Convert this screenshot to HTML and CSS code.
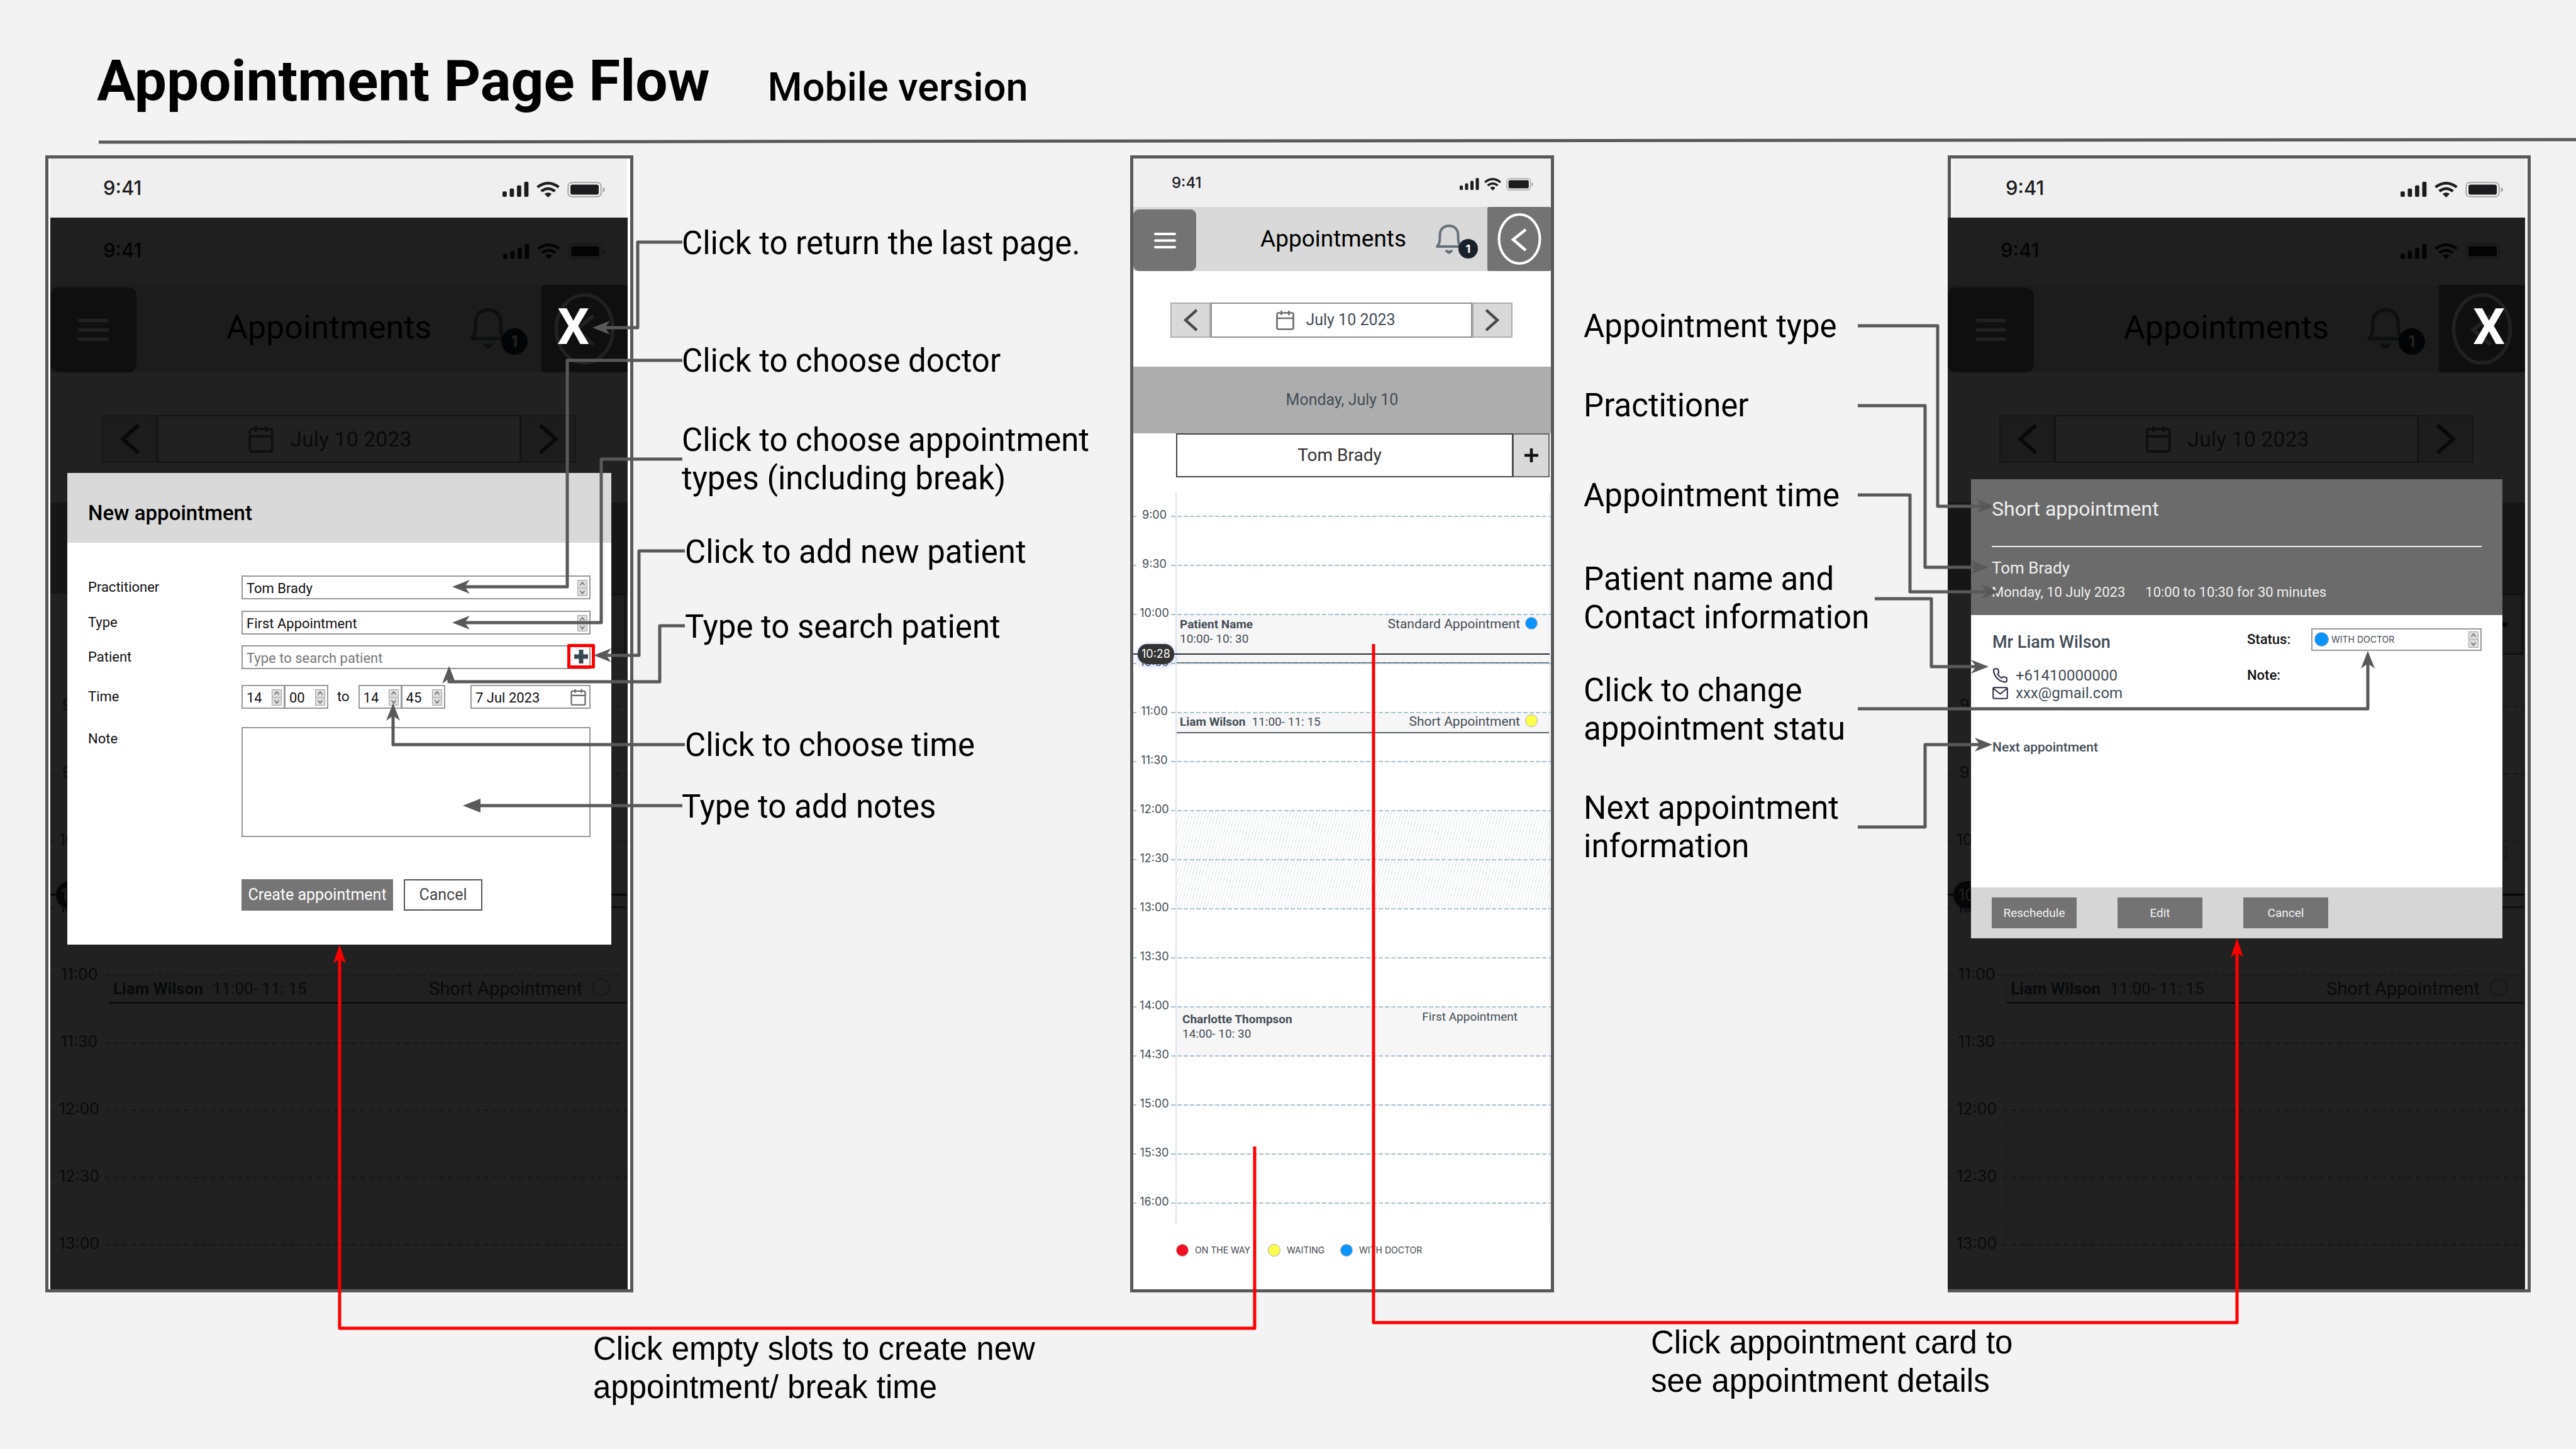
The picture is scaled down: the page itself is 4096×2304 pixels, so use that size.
FILE: index.html
```html
<!DOCTYPE html>
<html lang="en">
<head>
<meta charset="utf-8">
<title>Appointment Page Flow</title>
<link rel="stylesheet" href="styles.css">
</head>
<body>
<svg class="sprite" aria-hidden="true">
  <symbol id="i-signal" viewBox="0 0 31 19" preserveAspectRatio="none"><rect x="0" y="12" width="5" height="7" rx="1.5"/><rect x="8.5" y="8.5" width="5" height="10.500" rx="1.5"/><rect x="17" y="4.500" width="5" height="14.500" rx="1.5"/><rect x="25.500" y="0" width="5" height="19" rx="1.500"/></symbol>
  <symbol id="i-wifi" viewBox="0 0 27 20" preserveAspectRatio="none"><g fill="none" stroke="currentColor" stroke-width="3.4"><path d="M1.200 6.900Q13.500 -3.200 25.800 6.900"/><path d="M5.600 12Q13.500 5.400 21.400 12"/></g><path d="M9.300 15.400Q13.500 12 17.700 15.400L13.500 20Z"/></symbol>
  <symbol id="i-battery" viewBox="0 0 43 20" preserveAspectRatio="none"><rect x="1" y="1" width="37.500" height="18" rx="4.500" fill="#fff" fill-opacity=".4" stroke="#a6a6a6" stroke-width="1.500"/><rect x="3.600" y="3.600" width="32.300" height="12.800" rx="2.500"/><path d="M40.500 7Q43 8 43 10T40.500 13.500Z" fill="#a6a6a6"/></symbol>
  <symbol id="i-menu" viewBox="0 0 35 25"><path d="M2 2H33M2 12.500H33M2 23H33" fill="none" stroke="currentColor" stroke-width="4" stroke-linecap="round"/></symbol>
  <symbol id="i-bell" viewBox="0 0 41 47"><path d="M2 35C6 31 6.500 27 6.500 17C6.500 8 12 2 21 2S35.500 8 35.500 17C35.500 27 36 31 39.500 35Z" fill="none" stroke="currentColor" stroke-width="4" stroke-linejoin="round"/><path d="M15.500 41.500Q21 50 26.500 41.500Q23.500 40 21 43Q18.500 40 15.500 41.500Z" stroke="currentColor" stroke-width="1.500" stroke-linejoin="round"/></symbol>
  <symbol id="i-back" viewBox="0 0 70 82"><ellipse cx="35" cy="41" rx="32.500" ry="39" fill="none" stroke="currentColor" stroke-width="4"/><path d="M45 26L25 42L45 59" fill="none" stroke="currentColor" stroke-width="4.500"/></symbol>
  <symbol id="i-left" viewBox="0 0 22 36"><path d="M21 2L3 18L21 34" fill="none" stroke="currentColor" stroke-width="4.500"/></symbol>
  <symbol id="i-right" viewBox="0 0 22 36"><path d="M1 2L19 18L1 34" fill="none" stroke="currentColor" stroke-width="4.500"/></symbol>
  <symbol id="i-cal" viewBox="0 0 29 32"><path d="M4 4.500H25Q27.500 4.500 27.500 7V28Q27.500 30.500 25 30.500H4Q1.500 30.500 1.500 28V7Q1.500 4.500 4 4.500ZM1.500 13H27.500M8.500 1V8M20.500 1V8" fill="none" stroke="currentColor" stroke-width="2.600"/></symbol>
  <symbol id="i-plus" viewBox="0 0 22 22"><path d="M11 0V22M0 11H22" fill="none" stroke="currentColor" stroke-width="4.500"/></symbol>
  <symbol id="i-cross" viewBox="0 0 22 22"><path d="M11 0V22M0 11H22" fill="none" stroke="currentColor" stroke-width="7"/></symbol>
  <symbol id="i-step" viewBox="0 0 16 26"><path d="M.5 .5H15.500V25.500H.5ZM.5 13H15.500" fill="#ddd" stroke="#a2a2a2"/><path d="M4.500 8.500L8 4L11.500 8.500M4.500 17.500L8 22L11.500 17.500" fill="none" stroke="#666" stroke-width="1.400"/></symbol>
  <symbol id="i-phone" viewBox="0 0 24 24"><path d="M22 17v3.200a2 2 0 0 1-2.200 2A19.800 19.800 0 0 1 1.800 4.200 2 2 0 0 1 3.800 2H7a2 2 0 0 1 2 1.700c.1 1 .4 1.900.7 2.800a2 2 0 0 1-.5 2.100L8 9.900a16 16 0 0 0 6 6l1.300-1.300a2 2 0 0 1 2.100-.4c.9.300 1.800.6 2.800.7A2 2 0 0 1 22 17z" fill="none" stroke="currentColor" stroke-width="2"/></symbol>
  <symbol id="i-mail" viewBox="0 0 25 20"><path d="M3 1.200H22Q23.800 1.200 23.800 3V17Q23.800 18.800 22 18.800H3Q1.200 18.800 1.200 17V3Q1.200 1.200 3 1.200ZM1.500 2.500L12.500 11.500L23.500 2.500" fill="none" stroke="currentColor" stroke-width="2"/></symbol>
</svg>

<header class="page-head">
  <h1>Appointment Page Flow</h1>
  <p class="subtitle">Mobile version</p>
</header>

<main class="board">
  <section class="phone phone--first" aria-label="New appointment screen">
    <div class="statusbar statusbar--outer"><span>9:41</span><span class="sys"><svg class="sig"><use href="#i-signal"/></svg><svg class="wifi"><use href="#i-wifi"/></svg><svg class="batt"><use href="#i-battery"/></svg></span></div>
    <div class="screen screen--large">
      <div class="statusbar"><span>9:41</span><span class="sys"><svg class="sig"><use href="#i-signal"/></svg><svg class="wifi"><use href="#i-wifi"/></svg><svg class="batt"><use href="#i-battery"/></svg></span></div>
      <div class="appbar">
        <button class="menu" type="button" aria-label="Menu"><svg><use href="#i-menu"/></svg></button>
        <h2>Appointments</h2>
        <span class="alerts"><svg><use href="#i-bell"/></svg><b>1</b></span>
        <button class="back" type="button" aria-label="Back"><svg><use href="#i-back"/></svg></button>
      </div>
      <div class="datenav">
        <button type="button" aria-label="Previous day"><svg><use href="#i-left"/></svg></button>
        <div class="date"><svg><use href="#i-cal"/></svg>July 10 2023</div>
        <button type="button" aria-label="Next day"><svg><use href="#i-right"/></svg></button>
      </div>
      <div class="dayband">Monday, July 10</div>
      <div class="doctor"><div class="doctor-name">Tom Brady</div><button type="button" aria-label="Add"><svg><use href="#i-plus"/></svg></button></div>
      <div class="slots">
        <div class="lead"></div>
        <div class="slot"><time>9:00</time><div class="lane"></div></div>
        <div class="slot"><time>9:30</time><div class="lane"></div></div>
        <div class="slot"><time>10:00</time><div class="lane"><div class="appt"><div class="who"><b>Patient Name</b><span>10:00- 10: 30</span></div><span class="kind">Standard Appointment</span><i class="dot dot--blue"></i></div></div><div class="now"><span>10:28</span></div></div>
        <div class="slot"><time>10:30</time><div class="lane"></div></div>
        <div class="slot"><time>11:00</time><div class="lane"><div class="appt appt--short"><div class="who"><b>Liam Wilson</b><span>11:00- 11: 15</span></div><span class="kind">Short Appointment</span><i class="dot dot--yellow"></i></div></div></div>
        <div class="slot"><time>11:30</time><div class="lane"></div></div>
        <div class="slot"><time>12:00</time><div class="lane lane--break"></div></div>
        <div class="slot"><time>12:30</time><div class="lane lane--break"></div></div>
        <div class="slot slot--last"><time>13:00</time><div class="lane"></div></div>
      </div>
    </div>
    <button class="close" type="button" aria-label="Close">X</button>
    <form class="modal modal--new">
      <h2>New appointment</h2>
      <div class="fields">
        <label for="practitioner">Practitioner</label>
        <div class="pick"><select id="practitioner"><option>Tom Brady</option></select><svg><use href="#i-step"/></svg></div>
        <label for="type">Type</label>
        <div class="pick"><select id="type"><option>First Appointment</option></select><svg><use href="#i-step"/></svg></div>
        <label for="patient">Patient</label>
        <div class="pick"><input id="patient" type="text" placeholder="Type to search patient"><button class="add" type="button" aria-label="Add new patient"><svg><use href="#i-cross"/></svg></button></div>
        <label for="from-h">Time</label>
        <div class="times">
          <div class="pair"><div class="pick"><input id="from-h" type="text" value="14"><svg><use href="#i-step"/></svg></div><div class="pick"><input type="text" value="00" aria-label="From minutes"><svg><use href="#i-step"/></svg></div></div>
          <span>to</span>
          <div class="pair"><div class="pick"><input type="text" value="14" aria-label="To hour"><svg><use href="#i-step"/></svg></div><div class="pick"><input type="text" value="45" aria-label="To minutes"><svg><use href="#i-step"/></svg></div></div>
          <div class="pick pick--date"><input type="text" value="7 Jul 2023" aria-label="Date"><svg><use href="#i-cal"/></svg></div>
        </div>
        <label for="note">Note</label>
        <textarea id="note"></textarea>
        <div class="actions"><button class="primary" type="button">Create appointment</button><button class="plain" type="button">Cancel</button></div>
      </div>
    </form>
  </section>

  <div class="notes notes--left">
    <p>Click to return the last page.</p>
    <p>Click to choose doctor</p>
    <p>Click to choose appointment<br>types (including break)</p>
    <p class="inset">Click to add new patient</p>
    <p class="inset">Type to search patient</p>
    <p class="inset">Click to choose time</p>
    <p>Type to add notes</p>
  </div>

  <section class="phone" aria-label="Appointments screen">
    <div class="screen">
      <div class="statusbar"><span>9:41</span><span class="sys"><svg class="sig"><use href="#i-signal"/></svg><svg class="wifi"><use href="#i-wifi"/></svg><svg class="batt"><use href="#i-battery"/></svg></span></div>
      <div class="appbar">
        <button class="menu" type="button" aria-label="Menu"><svg><use href="#i-menu"/></svg></button>
        <h2>Appointments</h2>
        <span class="alerts"><svg><use href="#i-bell"/></svg><b>1</b></span>
        <button class="back" type="button" aria-label="Back"><svg><use href="#i-back"/></svg></button>
      </div>
      <div class="datenav">
        <button type="button" aria-label="Previous day"><svg><use href="#i-left"/></svg></button>
        <div class="date"><svg><use href="#i-cal"/></svg>July 10 2023</div>
        <button type="button" aria-label="Next day"><svg><use href="#i-right"/></svg></button>
      </div>
      <div class="dayband">Monday, July 10</div>
      <div class="doctor"><div class="doctor-name">Tom Brady</div><button type="button" aria-label="Add"><svg><use href="#i-plus"/></svg></button></div>
      <div class="slots">
        <div class="lead"></div>
        <div class="slot"><time>9:00</time><div class="lane"></div></div>
        <div class="slot"><time>9:30</time><div class="lane"></div></div>
        <div class="slot"><time>10:00</time><div class="lane"><div class="appt"><div class="who"><b>Patient Name</b><span>10:00- 10: 30</span></div><span class="kind">Standard Appointment</span><i class="dot dot--blue"></i></div></div><div class="now"><span>10:28</span></div></div>
        <div class="slot"><time>10:30</time><div class="lane"></div></div>
        <div class="slot"><time>11:00</time><div class="lane"><div class="appt appt--short"><div class="who"><b>Liam Wilson</b><span>11:00- 11: 15</span></div><span class="kind">Short Appointment</span><i class="dot dot--yellow"></i></div></div></div>
        <div class="slot"><time>11:30</time><div class="lane"></div></div>
        <div class="slot"><time>12:00</time><div class="lane lane--break"></div></div>
        <div class="slot"><time>12:30</time><div class="lane lane--break"></div></div>
        <div class="slot"><time>13:00</time><div class="lane"></div></div>
        <div class="slot"><time>13:30</time><div class="lane"></div></div>
        <div class="slot"><time>14:00</time><div class="lane"><div class="appt appt--plain"><div class="who"><b>Charlotte Thompson</b><span>14:00- 10: 30</span></div><span class="kind">First Appointment</span></div></div></div>
        <div class="slot"><time>14:30</time><div class="lane"></div></div>
        <div class="slot"><time>15:00</time><div class="lane"></div></div>
        <div class="slot"><time>15:30</time><div class="lane"></div></div>
        <div class="slot slot--last"><time>16:00</time><div class="lane"></div></div>
      </div>
      <ul class="legend">
        <li><i class="dot dot--red"></i>ON THE WAY</li>
        <li><i class="dot dot--yellow"></i>WAITING</li>
        <li><i class="dot dot--blue"></i>WITH DOCTOR</li>
      </ul>
    </div>
  </section>

  <div class="notes notes--right">
    <p>Appointment type</p>
    <p>Practitioner</p>
    <p>Appointment time</p>
    <p>Patient name and<br>Contact information</p>
    <p>Click to change<br>appointment statu</p>
    <p>Next appointment<br>information</p>
  </div>

  <section class="phone phone--last" aria-label="Appointment details screen">
    <div class="statusbar statusbar--outer"><span>9:41</span><span class="sys"><svg class="sig"><use href="#i-signal"/></svg><svg class="wifi"><use href="#i-wifi"/></svg><svg class="batt"><use href="#i-battery"/></svg></span></div>
    <div class="screen screen--large">
      <div class="statusbar"><span>9:41</span><span class="sys"><svg class="sig"><use href="#i-signal"/></svg><svg class="wifi"><use href="#i-wifi"/></svg><svg class="batt"><use href="#i-battery"/></svg></span></div>
      <div class="appbar">
        <button class="menu" type="button" aria-label="Menu"><svg><use href="#i-menu"/></svg></button>
        <h2>Appointments</h2>
        <span class="alerts"><svg><use href="#i-bell"/></svg><b>1</b></span>
        <button class="back" type="button" aria-label="Back"><svg><use href="#i-back"/></svg></button>
      </div>
      <div class="datenav">
        <button type="button" aria-label="Previous day"><svg><use href="#i-left"/></svg></button>
        <div class="date"><svg><use href="#i-cal"/></svg>July 10 2023</div>
        <button type="button" aria-label="Next day"><svg><use href="#i-right"/></svg></button>
      </div>
      <div class="dayband">Monday, July 10</div>
      <div class="doctor"><div class="doctor-name">Tom Brady</div><button type="button" aria-label="Add"><svg><use href="#i-plus"/></svg></button></div>
      <div class="slots">
        <div class="lead"></div>
        <div class="slot"><time>9:00</time><div class="lane"></div></div>
        <div class="slot"><time>9:30</time><div class="lane"></div></div>
        <div class="slot"><time>10:00</time><div class="lane"><div class="appt"><div class="who"><b>Patient Name</b><span>10:00- 10: 30</span></div><span class="kind">Standard Appointment</span><i class="dot dot--blue"></i></div></div><div class="now"><span>10:28</span></div></div>
        <div class="slot"><time>10:30</time><div class="lane"></div></div>
        <div class="slot"><time>11:00</time><div class="lane"><div class="appt appt--short"><div class="who"><b>Liam Wilson</b><span>11:00- 11: 15</span></div><span class="kind">Short Appointment</span><i class="dot dot--yellow"></i></div></div></div>
        <div class="slot"><time>11:30</time><div class="lane"></div></div>
        <div class="slot"><time>12:00</time><div class="lane lane--break"></div></div>
        <div class="slot"><time>12:30</time><div class="lane lane--break"></div></div>
        <div class="slot slot--last"><time>13:00</time><div class="lane"></div></div>
      </div>
    </div>
    <button class="close" type="button" aria-label="Close">X</button>
    <div class="modal modal--details">
      <div class="summary">
        <h2>Short appointment</h2>
        <p class="summary-doctor">Tom Brady</p>
        <p class="summary-time"><span>Monday, 10 July 2023</span><span>10:00 to 10:30 for 30 minutes</span></p>
      </div>
      <div class="details">
        <div class="person">
          <h3>Mr Liam Wilson</h3>
          <p><svg class="tel"><use href="#i-phone"/></svg>+61410000000</p>
          <p><svg class="mail"><use href="#i-mail"/></svg>xxx@gmail.com</p>
          <h4>Next appointment</h4>
        </div>
        <div class="state">
          <label for="status">Status:</label>
          <div class="pick pick--status"><select id="status"><option>WITH DOCTOR</option></select><i class="dot dot--blue"></i><svg><use href="#i-step"/></svg></div>
          <span>Note:</span>
        </div>
      </div>
      <div class="footer"><button type="button">Reschedule</button><button type="button">Edit</button><button type="button">Cancel</button></div>
    </div>
  </section>
</main>

<footer class="captions">
  <p>Click empty slots to create new<br>appointment/ break time</p>
  <p>Click appointment card to<br>see appointment details</p>
</footer>

<svg class="wires" viewBox="0 0 4096 2304" aria-hidden="true">
  <defs>
    <marker id="tip" markerUnits="userSpaceOnUse" markerWidth="30" markerHeight="24" refX="20" refY="12" orient="auto"><path d="M0 1L28 12L0 23L8 12Z" fill="#595959"/></marker>
    <marker id="tip-solid" markerUnits="userSpaceOnUse" markerWidth="30" markerHeight="24" refX="20" refY="12" orient="auto"><path d="M0 1L28 12L0 23Z" fill="#595959"/></marker>
    <marker id="tip-red" markerUnits="userSpaceOnUse" markerWidth="32" markerHeight="24" refX="20" refY="12" orient="auto"><path d="M0 2L30 12L0 22L8 12Z" fill="#f00"/></marker>
  </defs>
  <g class="wire">
    <path d="M157 226L4096 222"/>
    <path d="M1085 385H1014V521H950" marker-end="url(#tip)"/>
    <path d="M1085 573H902V933H727" marker-end="url(#tip)"/>
    <path d="M1085 730H956V990H727" marker-end="url(#tip)"/>
    <path d="M1089 876H1016V1042H952" marker-end="url(#tip)"/>
    <path d="M1089 995H1049V1084H714V1067" marker-end="url(#tip)"/>
    <path d="M1089 1184H625V1126" marker-end="url(#tip)"/>
    <path d="M1085 1281H744" marker-end="url(#tip-solid)"/>
    <path d="M2954 518H3081V805H3163" marker-end="url(#tip)"/>
    <path d="M2954 645H3061V902H3154" marker-end="url(#tip)"/>
    <path d="M2954 787H3037V941H3171" marker-end="url(#tip)"/>
    <path d="M2981 952H3071V1060H3154" marker-end="url(#tip)"/>
    <path d="M2954 1127H3765V1043" marker-end="url(#tip)"/>
    <path d="M2954 1315H3061V1184H3160" marker-end="url(#tip)"/>
  </g>
  <g class="wire wire--red">
    <path d="M1995 1823V2112H540V1512" marker-end="url(#tip-red)"/>
    <path d="M2184 1024V2103H3557V1502" marker-end="url(#tip-red)"/>
  </g>
</svg>
</body>
</html>
```
FILE: styles.css
```css
* { box-sizing: border-box; }
body { margin: 0; position: relative; min-height: 100vh; background: #f3f3f3; color: #000; font-family: Roboto, "Liberation Sans", sans-serif; overflow-x: hidden; }
h1, h2, h3, h4, p, ul { margin: 0; padding: 0; font-weight: 400; }
button, input, select, textarea { margin: 0; padding: 0; border: 0; border-radius: 0; font: inherit; color: inherit; background: none; appearance: none; outline: 0; }
svg { display: block; fill: currentColor; flex: none; }
.sprite { position: absolute; width: 0; height: 0; }

/* page heading */
.page-head { display: flex; align-items: baseline; gap: 92px; height: 247px; padding: 76px 0 0 154px; }
.page-head h1 { font-size: 91px; line-height: 106px; font-weight: 700; }
.subtitle { font-size: 63px; line-height: 74px; font-weight: 500; }

/* board */
.board { display: grid; grid-template-columns: minmax(0, 935fr) minmax(0, 790fr) minmax(0, 674fr) minmax(0, 626fr) minmax(0, 927fr); padding: 0 72px; }
.notes { display: grid; align-content: start; font-size: 51px; line-height: 61px; white-space: nowrap; }
.notes--left { grid-template-rows: 187px 126px 178px 119px 188px 98px 61px; padding: 109px 0 0 77px; }
.notes--right { grid-template-rows: 126px 143px 133px 177px 187px 122px; padding: 241px 0 0 47px; }
.inset { padding-left: 5px; }
.captions { display: grid; grid-template-columns: 1682fr 1471fr; padding-left: 943px; font: 51px/61px "Liberation Sans", Arial, sans-serif; }
.captions p { padding-top: 59px; }
.captions p + p { padding-top: 49px; }

.wires { position: absolute; left: 0; top: 0; width: 100%; height: auto; pointer-events: none; z-index: 5; }
.wire { fill: none; stroke: #595959; stroke-width: 5; stroke-linejoin: round; }
.wire--red { stroke: #f00; }

/* phone frame */
.phone { position: relative; border: 5px solid #595959; background: #fff; }
.phone--last { background: #f6f6f6; }
.screen {
  --ink: #434d55;
  --row: 78px;
  position: relative; background: #fff; color: var(--ink);
}
.statusbar { display: flex; justify-content: space-between; align-items: center; height: 77px; padding: 0 28px 0 61px; background: #efefef; color: #1c1c1e; font: 500 24px/28px Inter, sans-serif; }
.sys { display: flex; align-items: center; gap: 8px; padding-top: 4px; }
.sig { width: 31px; height: 19px; }
.wifi { width: 27px; height: 20px; }
.batt { width: 43px; height: 20px; }

.appbar { display: flex; align-items: center; height: 102px; background: #d9d9d9; }
.menu { display: grid; place-items: center; align-self: flex-end; width: 100px; height: 98px; border-radius: 9px; background: #737373; color: #fff; }
.menu svg { width: 35px; height: 25px; }
.appbar h2 { padding-left: 102px; font-size: 37px; line-height: 42px; color: #000; }
.alerts { position: relative; width: 67px; margin: 0 15px 0 auto; color: #67717a; }
.alerts svg { width: 41px; height: 47px; }
.alerts b { position: absolute; left: 36px; top: 23px; width: 31px; height: 31px; border-radius: 50%; background: #1a202c; color: #fff; font: 700 18px/31px Inter, sans-serif; text-align: center; }
.back { display: grid; place-items: center; width: 101px; height: 102px; border-radius: 3px; background: #737373; color: #fff; }
.back svg { width: 70px; height: 82px; }

.datenav { display: grid; grid-template-columns: 64px 1fr 64px; height: 152px; padding: 50px 61px 46px 59px; }
.datenav button { display: grid; place-items: center; border: 2px solid #adadad; background: #d9d9d9; color: #4a4a4a; }
.datenav button svg { width: 22px; height: 36px; }
.date { display: flex; align-items: center; justify-content: center; gap: 18px; padding-right: 18px; border: 2px solid #8f8f8f; font-size: 25px; line-height: 28px; }
.date svg { width: 29px; height: 32px; color: #6b6b6b; }
.dayband { height: 106px; background: #adadad; font-size: 25px; line-height: 106px; text-align: center; }
.doctor { display: grid; grid-template-columns: 1fr 58px; height: 70px; margin: 0 2px 23px 68px; }
.doctor-name { border: 2px solid #444; padding-right: 16px; color: #333; font-size: 28px; line-height: 66px; text-align: center; }
.doctor button { display: grid; place-items: center; border: 2px solid #666; border-left-width: 1px; background: #d9d9d9; color: #111; }
.doctor button svg { width: 22px; height: 22px; }

/* day grid */
.lead { height: 38px; margin: 0 2px 0 67px; border-left: 2px solid #dfe3ee; border-right: 1px solid #dfe3ee; }
.slot { position: relative; display: grid; grid-template-columns: 67px 1fr; height: var(--row); padding-right: 2px;
  background:
    repeating-linear-gradient(90deg, #a9c2d1 0 7px, transparent 7px 10px) 60px 0 / 100% 2px no-repeat,
    linear-gradient(#a9c2d1, #a9c2d1) 0 0 / 5px 2px no-repeat; }
.slot time { margin-top: -13px; height: 24px; font: 400 18px/24px Inter, sans-serif; text-align: center; }
.lane { border-left: 2px solid #dfe3ee; border-right: 1px solid #dfe3ee; }
.lane--break { background: repeating-linear-gradient(105deg, #dfe5ea 0 1px, transparent 1px 5px); margin-top: 2px; }
.slot--last { height: 34px; }
.appt { display: flex; align-items: flex-start; gap: 8px; height: calc(var(--row) - 1px); margin-top: 2px; padding: 3px 18px 0 5px; border-bottom: 2px solid #5a646b; background: #f6f6f6; font-size: 19px; line-height: 23px; }
.who { display: grid; margin-right: auto; }
.who b { font-weight: 700; }
.kind { font-size: 21px; }
.appt--short { height: 32px; padding-top: 2px; }
.appt--short .who { display: flex; gap: 10px; }
.appt--plain { height: calc(var(--row) - 2px); padding: 7px 50px 0 9px; border-bottom: 0; }
.appt--plain .kind { margin-top: -4px; font-size: 19px; }
.dot { width: 20px; height: 20px; border: 1px solid #aaa; border-radius: 50%; flex: none; }
.dot--blue { background: #0a94ff; }
.dot--yellow { background: #ffff4d; }
.dot--red { background: #f20d20; }
.now { position: absolute; z-index: 1; left: 0; right: 2px; top: 63px; border-top: 2px solid #2b2d31; }
.now span { position: absolute; left: 7px; top: -17px; width: 58px; height: 32px; border-radius: 15px; background: #333; color: #fff; font: 400 18px/32px Inter, sans-serif; text-align: center; box-shadow: 0 2px 10px rgba(80, 110, 230, .4); }
.legend { display: flex; height: 103px; padding: 32px 0 0 68px; list-style: none; color: #3f474d; font: 400 14px/20px Inter, sans-serif; }
.legend li { display: flex; gap: 10px; width: 146px; }
.legend li:nth-child(2) { width: 115px; }
.legend li:last-child { width: auto; }

/* dimmed, larger copy of the screen that sits behind a dialog */
.screen--large { --row: 107px; margin: 0 4px 0 3px; overflow: hidden; }
.screen--large::after { content: ""; position: absolute; z-index: 2; inset: 0; background: rgba(0, 0, 0, .87); }
.screen--large .dot { background: #f6f6f6; }
.phone--last .screen--large { margin: 0 4px 0 -5px; }
.screen--large .statusbar, .statusbar--outer { padding: 0 35px 0 84px; font-size: 31px; line-height: 36px; }
.screen--large .statusbar { height: 107px; padding-bottom: 4px; }
.statusbar--outer { height: 94px; margin: 0 5px 0 3px; }
.phone--last .statusbar--outer { margin-right: 4px; }
.screen--large .sys, .statusbar--outer .sys { gap: 12px; }
.screen--large .sig, .statusbar--outer .sig { width: 42px; height: 24px; }
.screen--large .wifi, .statusbar--outer .wifi { width: 37px; height: 25px; }
.screen--large .batt, .statusbar--outer .batt { width: 60px; height: 25px; }
.screen--large .appbar { height: 139px; }
.screen--large .menu { width: 137px; height: 135px; border-radius: 13px; }
.screen--large .menu svg { width: 49px; height: 35px; }
.screen--large .appbar h2 { padding: 0 0 4px 143px; font-size: 52px; line-height: 58px; }
.screen--large .alerts { width: 92px; margin-right: 22px; }
.screen--large .alerts svg { width: 57px; height: 65px; }
.screen--large .alerts b { left: 50px; top: 32px; width: 42px; height: 42px; font-size: 25px; line-height: 42px; }
.screen--large .back { width: 137px; height: 139px; }
.screen--large .back svg { width: 97px; height: 114px; }
.screen--large .datenav { grid-template-columns: 88px 1fr 88px; height: 207px; padding: 68px 82px 63px; }
.screen--large .datenav button svg { width: 31px; height: 50px; }
.screen--large .date { gap: 26px; padding-right: 28px; font-size: 34px; line-height: 40px; }
.screen--large .date svg { width: 40px; height: 44px; }
.screen--large .dayband { height: 145px; line-height: 145px; font-size: 33px; }
.screen--large .doctor { grid-template-columns: 1fr 80px; height: 97px; margin: 0 3px 30px 93px; }
.screen--large .doctor-name { font-size: 38px; line-height: 93px; }
.screen--large .doctor button svg { width: 30px; height: 30px; }
.screen--large .lead { height: 51px; margin-left: 92px; }
.screen--large .slot { grid-template-columns: 92px 1fr;
  background:
    repeating-linear-gradient(90deg, #a9c2d1 0 9px, transparent 9px 14px) 86px 0 / 100% 3px no-repeat,
    linear-gradient(#a9c2d1, #a9c2d1) 0 0 / 5px 3px no-repeat; }
.screen--large .slot time { margin-top: -17px; height: 32px; font-size: 25px; line-height: 32px; }
.screen--large .slot--last { height: 72px; }
.screen--large .appt { padding: 5px 25px 0 6px; gap: 16px; font-size: 26px; line-height: 32px; border-bottom-width: 3px; }
.screen--large .kind { font-size: 29px; line-height: 32px; }
.screen--large .appt--short { height: 44px; padding-top: 4px; }
.screen--large .appt--short .who { gap: 15px; }
.screen--large .dot { width: 28px; height: 28px; border-width: 2px; }
.screen--large .now { top: 85px; border-top-width: 3px; }
.screen--large .now span { left: 9px; top: -23px; width: 80px; height: 44px; border-radius: 22px; font-size: 25px; line-height: 44px; }

.close { position: absolute; z-index: 3; top: 228px; right: 65px; color: #fff; font-size: 80px; font-weight: 700; line-height: 80px; }
.phone--last .close { right: 36px; }

/* dialogs */
.modal { position: absolute; z-index: 3; background: #fff; }
.modal--new { left: 30px; right: 30px; top: 500px; font-size: 22px; line-height: 38px; }
.modal--new h2 { height: 111px; padding: 44px 33px 0; background: #d9d9d9; font-size: 33px; line-height: 40px; font-weight: 500; }
.fields { display: grid; grid-template-columns: 244px 1fr; grid-template-rows: 56px 55px 63px 67px 242px 104px; align-items: start; padding: 52px 33px 0 33px; color: #111; }
.pick { position: relative; min-width: 0; }
.pick select, .pick input { display: block; width: 100%; height: 38px; padding: 3px 6px 0; border: 2px solid #999; font-size: 22px; line-height: 30px; }
.pick input::placeholder { color: #777; opacity: 1; }
.pick > svg { position: absolute; right: 5px; top: 7px; width: 16px; height: 26px; }
.add { position: absolute; right: -7px; top: -2px; display: grid; place-items: center; width: 44px; height: 39px; border: 5px solid #f00; border-radius: 2px; color: #3a4650; }
.add svg { width: 22px; height: 22px; }
.times { display: flex; gap: 14px; }
.pair { display: grid; grid-template-columns: 69px 69px; }
.pair .pick + .pick { margin-left: -1px; }
.pick--date { width: 191px; margin-left: auto; }
.pick--date > svg { right: 7px; top: 6px; width: 25px; height: 27px; color: #666; }
textarea { width: 100%; height: 175px; border: 2px solid #999; resize: none; }
.actions { grid-column: 2; display: flex; gap: 17px; font-size: 25px; }
.actions button { height: 50px; }
.primary { width: 241px; background: #757575; color: #fff; }
.plain { width: 125px; border: 2px solid #555; color: #444; }

.modal--details { left: 32px; right: 40px; top: 510px; color: #424d56; }
.summary { height: 216px; padding: 28px 33px 0; background: #6b6b6b; color: #f0f0f0; }
.summary h2 { padding-bottom: 40px; border-bottom: 2px solid #f0f0f0; font-size: 32px; line-height: 38px; }
.summary-doctor { margin-top: 18px; font-size: 26px; line-height: 30px; }
.summary-time { display: flex; gap: 32px; margin-top: 11px; font-size: 22px; line-height: 26px; }
.details { display: grid; grid-template-columns: 405px 1fr; height: 433px; padding: 21px 33px 0 34px; }
.person { padding-top: 6px; font-weight: 500; }
.person h3 { margin-bottom: 23px; font-size: 27px; line-height: 32px; font-weight: 500; }
.person h4 { margin-top: 60px; font-size: 21px; line-height: 24px; font-weight: 500; }
.person p { display: flex; align-items: center; gap: 12px; font-size: 24px; line-height: 28px; }
.tel { width: 25px; height: 26px; color: #2f2b45; }
.mail { width: 25px; height: 20px; color: #2f2b45; }
.state { display: grid; grid-template-columns: 102px 1fr; grid-template-rows: 62px 26px; align-content: start; color: #111; font-size: 22px; font-weight: 500; line-height: 26px; }
.state label { line-height: 36px; }
.pick--status select { height: 36px; padding: 0 0 0 30px; color: #424d56; font: 400 14px/32px Inter, sans-serif; }
.pick--status .dot { position: absolute; left: 5px; top: 6px; width: 23px; height: 23px; }
.pick--status > svg { top: 5px; }
.footer { display: flex; gap: 65px; height: 81px; padding: 16px 33px; background: #d6d6d6; }
.footer button { width: 135px; background: #737373; color: #f4f4f4; font-size: 19px; }
```
